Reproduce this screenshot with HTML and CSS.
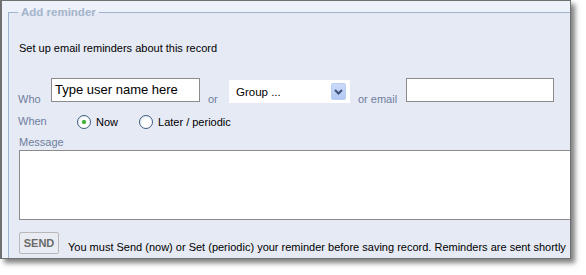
FILE: index.html
```html
<!DOCTYPE html>
<html>
<head>
<meta charset="utf-8">
<link rel="stylesheet" href="styles.css">
</head>
<body>
<div class="window">
  <fieldset class="box">
    <legend class="legend">Add reminder</legend>
    <p class="intro">Set up email reminders about this record</p>
    <div class="row who-row">
      <span class="lbl lbl-who">Who</span>
      <div class="input user">Type user name here</div>
      <span class="lbl lbl-or">or</span>
      <div class="select">
        <span class="select-text">Group ...</span>
        <span class="select-btn">
          <svg width="9" height="6" viewBox="0 0 9 6"><path d="M1 1 L4.5 4.5 L8 1" fill="none" stroke="#3f5178" stroke-width="2"/></svg>
        </span>
      </div>
      <span class="lbl lbl-email">or email</span>
      <div class="input email"></div>
    </div>
    <div class="row when-row">
      <span class="lbl lbl-when">When</span>
      <span class="radio checked"></span>
      <span class="opt">Now</span>
      <span class="radio second"></span>
      <span class="opt">Later / periodic</span>
    </div>
    <div class="lbl lbl-msg">Message</div>
    <div class="textarea"></div>
    <div class="row send-row">
      <span class="send">SEND</span>
      <span class="note">You must Send (now) or Set (periodic) your reminder before saving record. Reminders are sent shortly</span>
    </div>
  </fieldset>
</div>
</body>
</html>
```
FILE: styles.css
```css
html, body {
  margin: 0;
  padding: 0;
  background: #ffffff;
}
body {
  font-family: "Liberation Sans", Arial, sans-serif;
  font-size: 11px;
  width: 586px;
  height: 275px;
}
.window {
  width: 568px;
  height: 257px;
  border: 1px solid #707070;
  border-left-width: 2px;
  background: #edf1fa;
  box-shadow: 4px 4px 5px rgba(0, 0, 0, 0.5);
  overflow: hidden;
}
.box {
  margin: 4px 0 0 6px;
  padding: 0 0 0 9px;
  border: 1px solid #9db3cf;
  background: #e6eaf4;
  width: 600px;
  height: 300px;
  box-sizing: border-box;
  min-width: 0;
}
.legend {
  padding: 0 3px;
  margin-left: 0;
  font-size: 11.5px;
  line-height: 14px;
  font-weight: bold;
  color: #a4b4cc;
}
.intro {
  margin: 23px 0 0 1px;
  line-height: 13px;
  color: #000;
}
.row {
  display: flex;
  align-items: flex-start;
}
.lbl {
  color: #6e7ea0;
  line-height: 13px;
}
.who-row {
  margin-top: 23px;
}
.lbl-who {
  width: 33px;
  margin-top: 15px;
}
.input {
  background: #ffffff;
  border: 1px solid #8b8b8b;
  height: 22px;
  box-sizing: content-box;
}
.user {
  font-size: 13px;
  line-height: 21px;
  padding-left: 3px;
  width: 144px;
  color: #000;
}
.lbl-or {
  margin: 15px 0 0 8px;
  width: 21px;
}
.select {
  margin-top: 2px;
  width: 121px;
  height: 23px;
  background: #ffffff;
  display: flex;
  align-items: flex-start;
  justify-content: space-between;
  box-sizing: border-box;
  padding: 3px 4px 0 7px;
}
.select-text {
  font-size: 11.5px;
  line-height: 14px;
  margin-top: 2px;
  color: #000;
}
.select-btn {
  width: 15px;
  height: 17px;
  border-radius: 2px;
  background: linear-gradient(#cbdaf9, #b3c9f3);
  border: 1px solid #b9cdf2;
  box-sizing: border-box;
  display: flex;
  align-items: center;
  justify-content: center;
}
.lbl-email {
  margin: 15px 0 0 8px;
  width: 48px;
}
.email {
  width: 146px;
}
.when-row {
  margin-top: 9px;
}
.lbl-when {
  width: 59px;
  margin-top: 0;
}
.radio {
  width: 12px;
  height: 12px;
  border-radius: 50%;
  border: 1px solid #3e5d80;
  background: radial-gradient(circle at 60% 65%, #ffffff 40%, #dfe4ea 100%);
  box-sizing: content-box;
  position: relative;
  flex: none;
}
.radio.checked::after {
  content: "";
  position: absolute;
  left: 4px;
  top: 4px;
  width: 4px;
  height: 4px;
  border-radius: 50%;
  background: #3fae3a;
  box-shadow: 0 0 1px #6fd06a;
}
.opt {
  margin: 1px 0 0 5px;
  line-height: 13px;
  color: #000;
}
.radio.second {
  margin-left: 21px;
}
.lbl-msg {
  margin: 7px 0 0 1px;
}
.textarea {
  margin: 1px 0 0 1px;
  width: 560px;
  height: 68px;
  background: #ffffff;
  border: 1px solid #8b8b8b;
}
.send-row {
  margin-top: 12px;
}
.send {
  margin-left: 1px;
  width: 38px;
  height: 20px;
  border: 1px solid #b8b8b8;
  border-radius: 2px;
  box-sizing: content-box;
  font-weight: bold;
  font-size: 11px;
  line-height: 21px;
  color: #6a6a6a;
  text-align: center;
  background: #e9ecf2;
}
.note {
  margin: 9px 0 0 9px;
  line-height: 13px;
  white-space: nowrap;
  color: #000;
}
```
